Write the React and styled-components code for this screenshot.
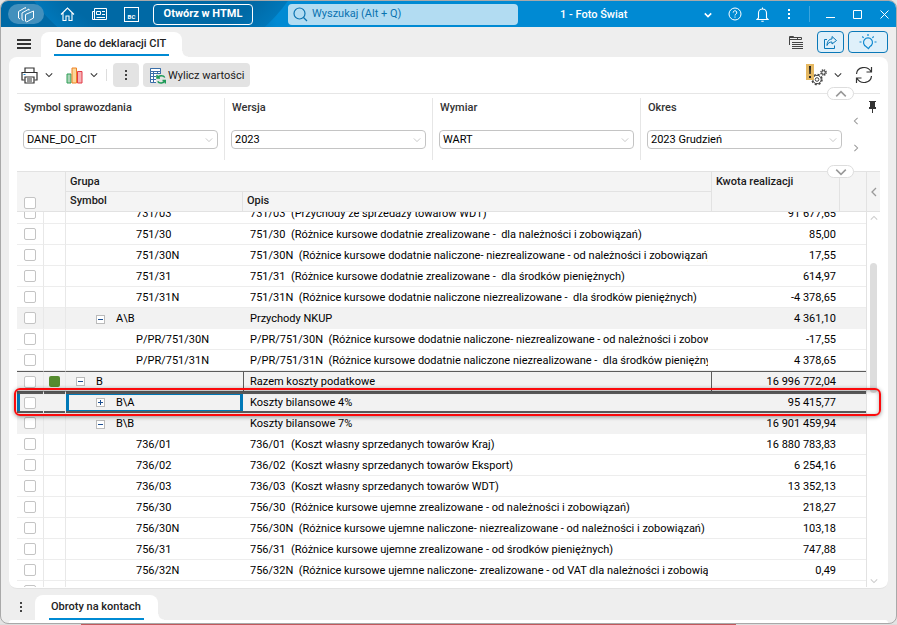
import React, { useLayoutEffect, useRef } from 'react';
import styled, { createGlobalStyle, css } from 'styled-components';

const filters = [
  { id: 'symbol', label: 'Symbol sprawozdania', value: 'DANE_DO_CIT' },
  { id: 'version', label: 'Wersja', value: '2023' },
  { id: 'dimension', label: 'Wymiar', value: 'WART' },
  { id: 'period', label: 'Okres', value: '2023 Grudzień' },
];

const rows = [
  { symbol: '731/03', name: '731/03  (Przychody ze sprzedaży towarów WDT)', amount: '91 677,65' },
  { symbol: '751/30', name: '751/30  (Różnice kursowe dodatnie zrealizowane -  dla należności i zobowiązań)', amount: '85,00' },
  { symbol: '751/30N', name: '751/30N  (Różnice kursowe dodatnie naliczone- niezrealizowane - od należności i zobowiązań)', amount: '17,55' },
  { symbol: '751/31', name: '751/31  (Różnice kursowe dodatnie zrealizowane -  dla środków pieniężnych)', amount: '614,97' },
  { symbol: '751/31N', name: '751/31N  (Różnice kursowe dodatnie naliczone niezrealizowane -  dla środków pieniężnych)', amount: '-4 378,65' },
  { symbol: 'A\\B', name: 'Przychody NKUP', amount: '4 361,10', level: 1, toggle: 'minus' },
  { symbol: 'P/PR/751/30N', name: 'P/PR/751/30N  (Różnice kursowe dodatnie naliczone- niezrealizowane - od należności i zobowiązań)', amount: '-17,55' },
  { symbol: 'P/PR/751/31N', name: 'P/PR/751/31N  (Różnice kursowe dodatnie naliczone niezrealizowane -  dla środków pieniężnych)', amount: '4 378,65' },
  { symbol: 'B', name: 'Razem koszty podatkowe', amount: '16 996 772,04', level: 0, toggle: 'minus', marked: true },
  { symbol: 'B\\A', name: 'Koszty bilansowe 4%', amount: '95 415,77', level: 1, toggle: 'plus', selected: true },
  { symbol: 'B\\B', name: 'Koszty bilansowe 7%', amount: '16 901 459,94', level: 1, toggle: 'minus' },
  { symbol: '736/01', name: '736/01  (Koszt własny sprzedanych towarów Kraj)', amount: '16 880 783,83' },
  { symbol: '736/02', name: '736/02  (Koszt własny sprzedanych towarów Eksport)', amount: '6 254,16' },
  { symbol: '736/03', name: '736/03  (Koszt własny sprzedanych towarów WDT)', amount: '13 352,13' },
  { symbol: '756/30', name: '756/30  (Różnice kursowe ujemne zrealizowane - od należności i zobowiązań)', amount: '218,27' },
  { symbol: '756/30N', name: '756/30N  (Różnice kursowe ujemne naliczone- niezrealizowane - od należności i zobowiązań)', amount: '103,18' },
  { symbol: '756/31', name: '756/31  (Różnice kursowe ujemne zrealizowane - od środków pieniężnych)', amount: '747,88' },
  { symbol: '756/32N', name: '756/32N  (Różnice kursowe ujemne naliczone- zrealizowane - od VAT dla należności i zobowiązań)', amount: '0,49' },
  { symbol: '', name: '', amount: '' },
];

const Chevron = ({ dir = 'down', size = 8, color = '#333', width = 1.3 }) => {
  const d = {
    down: 'M1 3 L5 7 L9 3',
    up: 'M1 7 L5 3 L9 7',
    left: 'M7 1 L3 5 L7 9',
    right: 'M3 1 L7 5 L3 9',
  }[dir];
  return (
    <Icon width={size} height={size} viewBox="0 0 10 10" stroke={color} strokeWidth={width}>
      <path d={d} />
    </Icon>
  );
};

const Dots = ({ color = '#444' }) => (
  <Icon width="4" height="12" viewBox="0 0 4 12" fill={color}>
    <path d="M1 1h2v2H1zM1 5h2v2H1zM1 9h2v2H1z" />
  </Icon>
);

function TitleBar() {
  return (
    <Bar>
      <BarLeft>
        <LogoButton aria-label="Menu główne">
          <Icon width="18" height="17" viewBox="0 0 18 17" stroke="#fff" strokeWidth="1">
            <path d="M3 13L1.500 12V5.500L8.500 1.500v1" />
            <path d="M6.500 14.500L5 13.500V7L12 3v1.500" />
            <path d="M8.500 8.500L16.500 5V12L9.500 16l-1-1z" />
          </Icon>
        </LogoButton>
        <BarButton aria-label="Start">
          <Icon width="15" height="14" viewBox="0 0 15 14" stroke="#fff" strokeWidth="1.100">
            <path d="M1 7.500L7.500 1 14 7.500M3 6v7.500h3V9h3v4.500h3V6" />
          </Icon>
        </BarButton>
        <BarButton aria-label="Wiadomości">
          <Icon width="17" height="14" viewBox="0 0 17 14" stroke="#fff">
            <path d="M3.500 1.500h12v11h-14V4.500h2M3.500 1.500v11M5.500 4.500h4v3h-4zM11 4.500h3M11 7.500h3M5.500 10.500H14" />
          </Icon>
        </BarButton>
        <BarButton aria-label="BC">
          <BcMark>BC</BcMark>
        </BarButton>
        <HtmlButton>Otwórz w HTML</HtmlButton>
      </BarLeft>
      <SearchBox>
        <Icon width="15" height="15" viewBox="0 0 15 15" stroke="#0b73b0" strokeWidth="1.200">
          <circle cx="6.500" cy="6.500" r="5.500" />
          <path d="M10.500 10.500L14 14" />
        </Icon>
        <input type="search" aria-label="Wyszukaj" placeholder="Wyszukaj (Alt + Q)" />
      </SearchBox>
      <CompanyPicker>
        <select aria-label="Firma">
          <option>1 - Foto Świat</option>
        </select>
        <Chevron color="#fff" size={8} width={2} />
      </CompanyPicker>
      <BarRight>
        <BarButton aria-label="Pomoc">
          <Icon width="14" height="14" viewBox="0 0 14 14" stroke="#fff">
            <circle cx="7" cy="7" r="6" />
            <path d="M5.200 5.600a1.800 1.800 0 1 1 2.700 1.500c-.7.400-.9.700-.9 1.400M7 9.500v1.200" />
          </Icon>
        </BarButton>
        <BarButton aria-label="Powiadomienia">
          <Icon width="13" height="15" viewBox="0 0 13 15" stroke="#fff" strokeWidth="1.100">
            <path d="M6.500 0.500v1.200M2.500 11V6a4 4 0 0 1 8 0v5l1.500 1.500H1zM5.300 14.200h2.400" />
          </Icon>
        </BarButton>
        <MoreButton aria-label="Więcej"><Dots color="#fff" /></MoreButton>
        <BarSeparator />
        <WindowButton aria-label="Minimalizuj">
          <Icon width="11" height="11" viewBox="0 0 11 11" stroke="#fff"><path d="M1 8.500h9" /></Icon>
        </WindowButton>
        <WindowButton aria-label="Maksymalizuj">
          <Icon width="11" height="11" viewBox="0 0 11 11" stroke="#fff"><path d="M1.500 1.500h8v8h-8z" /></Icon>
        </WindowButton>
        <WindowButton aria-label="Zamknij">
          <Icon width="11" height="11" viewBox="0 0 11 11" stroke="#fff"><path d="M1.500 1.500l8 8M9.500 1.500l-8 8" /></Icon>
        </WindowButton>
      </BarRight>
    </Bar>
  );
}

function TabStrip() {
  return (
    <Strip>
      <MenuButton aria-label="Menu">
        <Icon width="14" height="12" viewBox="0 0 14 12" fill="#333">
          <path d="M0 1h14v2H0zM0 5h14v2H0zM0 9h14v2H0z" />
        </Icon>
      </MenuButton>
      <Tab href="#cit"><span>Dane do deklaracji CIT</span></Tab>
      <StripActions>
        <BarButton aria-label="Lista okien">
          <Icon width="15" height="14" viewBox="0 0 15 14" stroke="#444">
            <path d="M1.500 10V1.500h4l.5 1h7.500v2M1.500 2.500H6M1.500 4.500h12M9.500 2.500v2M4 7.500h11M4 9.500h11M4 11.500h11M4 13.500h11" />
          </Icon>
        </BarButton>
        <OutlineButton $width={27} aria-label="Udostępnij">
          <Icon width="15" height="15" viewBox="0 0 15 15" stroke="#0a78b8">
            <path d="M4 4.500H1.500v9h10v-3" />
            <path d="M9 1.500l4.500 4L9 9V7C6.500 7 5 8 4 10.500 4 6.500 6 4 9 4z" />
          </Icon>
        </OutlineButton>
        <OutlineButton $width={40} aria-label="Podpowiedzi">
          <Icon width="18" height="16" viewBox="0 0 18 16" stroke="#0f88cf" strokeWidth="1.200">
            <path d="M7 12.500a4.500 4.500 0 1 1 4 0l-1.500 2.200z" />
            <path d="M9 0v2M3.300 2.500l1.300 1.300M14.700 2.500l-1.300 1.300M0.500 8h2M15.500 8h2" />
          </Icon>
        </OutlineButton>
      </StripActions>
    </Strip>
  );
}

function Toolbar() {
  return (
    <Tools>
      <IconButton aria-label="Drukuj">
        <Icon width="17" height="17" viewBox="0 0 17 17" stroke="#333" strokeWidth="1.200">
          <path d="M4 5V1h9v4M3.500 13H1V5.500h15V13h-2.500" />
          <path d="M4 10h9v6H4zM6 12h5M6 14h5" />
          <path d="M2.500 7.500h2" stroke="#1c86d1" />
        </Icon>
        <Chevron />
      </IconButton>
      <IconButton aria-label="Wykres">
        <Icon width="17" height="17" viewBox="0 0 17 17">
          <path d="M1 7h4v9H1z" fill="#a9d4b6" stroke="#2e9e57" />
          <path d="M11.500 4.500h4.500V16h-4.500z" fill="#f6b1b6" stroke="#e23b47" />
          <path d="M6 1h4.500v15H6z" fill="#fbd79a" stroke="#ee8324" />
        </Icon>
        <Chevron />
      </IconButton>
      <ToolSeparator />
      <GreyButton $width={26} aria-label="Więcej opcji"><Dots /></GreyButton>
      <GreyButton>
        <Icon width="17" height="17" viewBox="0 0 17 17" stroke="#3a6ea8">
          <path d="M1.500 1.500h10v14h-10z" fill="#fff" />
          <path d="M1.500 1.500h10v3h-10z" fill="#fff" />
          <path d="M2 6.500h9.500M2 9.500h7M2 12.500h6M4.500 5v10M8.500 5v10" />
          <path d="M7 7h10v10H7z" fill="#e3e3e3" stroke="none" />
          <path d="M8 8v3h3M8.500 11c1-3 6-3 7.300-.5M16.500 16.500v-3h-3M16 13.500c-1 3-6 3.200-7.300.8" stroke="#1d9a57" strokeWidth="1.500" />
        </Icon>
        <span>Wylicz wartości</span>
      </GreyButton>
      <ToolsRight>
        <IconButton aria-label="Ustawienia">
          <Icon width="21" height="22" viewBox="0 0 21 22" stroke="#444">
            <circle cx="11" cy="15.500" r="5" strokeWidth="1.500" strokeDasharray="2.100 1.827" />
            <circle cx="11" cy="15.500" r="4.200" />
            <circle cx="11" cy="15.500" r="1.800" />
            <circle cx="17.500" cy="8.500" r="2.600" strokeWidth="1.500" strokeDasharray="1.300 .742" />
            <circle cx="17.500" cy="8.500" r="1.700" />
            <path d="M0 0h8v16H0z" fill="#e5b862" stroke="none" />
            <path d="M3 2h2l-.3 8H3.300zM3 12h2v2H3z" fill="#222" stroke="none" />
          </Icon>
          <Chevron />
        </IconButton>
        <IconButton aria-label="Odśwież">
          <Icon width="18" height="18" viewBox="0 0 18 18" stroke="#333" strokeWidth="1.200">
            <path d="M1.500 8C2 1 12 -1 16 5.500M16.500 1v5h-5M16.500 10C16 17 6 19 2 12.500M1.500 17v-5h5" />
          </Icon>
        </IconButton>
      </ToolsRight>
      <Handle aria-label="Zwiń filtry"><Chevron dir="up" size={12} color="#999" /></Handle>
    </Tools>
  );
}

function Filters() {
  return (
    <FilterBar>
      {filters.map(filter => (
        <FilterField key={filter.id}>
          <label htmlFor={filter.id}>{filter.label}</label>
          <SelectBox>
            <select id={filter.id}>
              <option>{filter.value}</option>
            </select>
            <Chevron color="#bbb" width={1} />
          </SelectBox>
        </FilterField>
      ))}
      <FilterNav>
        <BarButton aria-label="Poprzedni okres"><Chevron dir="left" color="#999" /></BarButton>
        <BarButton aria-label="Następny okres"><Chevron dir="right" color="#999" /></BarButton>
      </FilterNav>
      <PinButton aria-label="Przypnij">
        <Icon width="7" height="12" viewBox="0 0 7 12" fill="#333">
          <path d="M0 0h7v1H6v5h1v2H4v4H3V8H0V6h1V1H0z" />
        </Icon>
      </PinButton>
      <Handle aria-label="Rozwiń filtry"><Chevron dir="down" size={12} color="#999" /></Handle>
    </FilterBar>
  );
}

const Columns = () => (
  <colgroup>
    <col width="27" />
    <col width="22" />
    <col width="177" />
    <col />
    <col width="128" />
    <col width="27" />
  </colgroup>
);

function ReportGrid() {
  const bodyRef = useRef(null);

  useLayoutEffect(() => {
    bodyRef.current.scrollTop = 9;
  }, []);

  return (
    <GridBox>
      <GridMain>
        <HeadTable>
          <Columns />
          <thead>
            <tr>
              <th colSpan={2} rowSpan={2} className="check">
                <Check type="checkbox" aria-label="Zaznacz wszystko" />
              </th>
              <th colSpan={2} className="top">Grupa</th>
              <th rowSpan={2} className="top">Kwota realizacji</th>
              <th rowSpan={2} aria-label="Akcje" />
            </tr>
            <tr>
              <th>Symbol</th>
              <th>Opis</th>
            </tr>
          </thead>
        </HeadTable>
        <GridBody ref={bodyRef}>
          <BodyTable>
            <Columns />
            <tbody>
              {rows.map((row, i) => (
                <Row key={i} $group={row.toggle} $marked={row.marked} $selected={row.selected}>
                  <td className="check">
                    <Check type="checkbox" aria-label={`Zaznacz ${row.symbol}`} />
                  </td>
                  <td className="mark">{row.marked && <Marker />}</td>
                  <td className="symbol">
                    <SymbolCell $indent={row.toggle ? 10 + row.level * 20 : 70}>
                      {row.toggle && (
                        <Toggle aria-label={row.toggle === 'plus' ? 'Rozwiń' : 'Zwiń'}>
                          <Icon width="7" height="7" viewBox="0 0 7 7" stroke="#1d4f91">
                            <path d={row.toggle === 'plus' ? 'M1 3.500h5M3.500 1v5' : 'M1 3.500h5'} />
                          </Icon>
                        </Toggle>
                      )}
                      {row.symbol}
                    </SymbolCell>
                  </td>
                  <td className="name"><Clip>{row.name}</Clip></td>
                  <td className="amount">{row.amount}</td>
                  <td />
                </Row>
              ))}
            </tbody>
          </BodyTable>
        </GridBody>
      </GridMain>
      <GridSide>
        <SideToggle aria-label="Panel boczny"><Chevron dir="left" size={10} color="#999" /></SideToggle>
        <ScrollTrack>
          <Chevron dir="up" color="#ccc" />
          <Thumb />
          <Chevron dir="down" color="#ccc" />
        </ScrollTrack>
      </GridSide>
      <Highlight />
    </GridBox>
  );
}

export default function App() {
  return (
    <Desktop>
      <GlobalStyle />
      <Window>
        <TitleBar />
        <TabStrip />
        <Panel>
          <Toolbar />
          <Filters />
          <ReportGrid />
        </Panel>
        <BottomStrip>
          <BarButton aria-label="Więcej zakładek"><Dots /></BarButton>
          <Tab href="#obroty" $small><span>Obroty na kontach</span></Tab>
        </BottomStrip>
        <BottomPanel />
      </Window>
    </Desktop>
  );
}

const GlobalStyle = createGlobalStyle`
  * {
    box-sizing: border-box;
  }

  body {
    margin: 0;
    color: #1a1a1a;
    font: 11px/14px Roboto, 'Liberation Sans', sans-serif;
  }

  button, input, select {
    margin: 0;
    padding: 0;
    border: 0;
    background: none;
    color: inherit;
    font: inherit;
  }

  select {
    appearance: none;
  }
`;

const Icon = styled.svg.attrs(props => ({ fill: props.fill || 'none' }))`
  display: block;
  flex: none;
`;

const Desktop = styled.div`
  display: flex;
  height: 100vh;
  padding-bottom: 1px;
  background: linear-gradient(to right, #ddd 9%, #c0595d 9%, #c0595d 82%, #ddd 82%) bottom / 100% 1px no-repeat #e4e4e4;
`;

const Window = styled.div`
  display: flex;
  flex: 1;
  flex-direction: column;
  min-width: 0;
  overflow: hidden;
  border: 1px solid #a9a9a9;
  border-radius: 8px;
  background: #eee;
`;

const Bar = styled.header`
  display: flex;
  flex: none;
  align-items: center;
  height: 26px;
  padding: 0 5px 0 7px;
  background:
    radial-gradient(circle at 160px -90px, #0069a5 130px, #0077b9 155px, transparent 156px),
    linear-gradient(to right, #0069a5 230px, #007cc2 258px, #008ad3 276px);
  color: #fff;
`;

const BarLeft = styled.div`
  display: flex;
  flex: 0 0 280px;
  align-items: center;
  gap: 16px;
`;

const BarButton = styled.button`
  display: flex;
  align-items: center;
  justify-content: center;
`;

const LogoButton = styled(BarButton)`
  width: 36px;
  height: 20px;
  border-radius: 10px;
  background: #4390bd;
`;

const BcMark = styled.span`
  width: 15px;
  height: 15px;
  border: 1px solid #fff;
  font-size: 6px;
  font-weight: 700;
  line-height: 17px;
`;

const HtmlButton = styled.button`
  width: 100px;
  height: 21px;
  margin-left: -2px;
  border: 1px solid #fff;
  border-radius: 4px;
  font-weight: 700;
`;

const SearchBox = styled.div`
  display: flex;
  flex: 0 1 230px;
  align-items: center;
  gap: 4px;
  height: 21px;
  padding: 0 5px;
  border-radius: 4px;
  background: #b2dcf2;
  color: #0b73b0;

  input {
    flex: 1;
    min-width: 0;
    outline: 0;
  }

  input::placeholder {
    color: #0b73b0;
    opacity: 1;
  }
`;

const CompanyPicker = styled.div`
  display: flex;
  flex: 1;
  align-items: center;
  padding: 1px 16px 0 42px;

  select {
    flex: 1;
    font-weight: 500;
  }
`;

const BarRight = styled.div`
  display: flex;
  flex: none;
  align-items: center;
  gap: 14px;
`;

const MoreButton = styled(BarButton)`
  margin-left: 4px;
`;

const BarSeparator = styled.span`
  width: 1px;
  height: 16px;
  margin-left: 4px;
  background: #3ba5de;
`;

const WindowButton = styled(BarButton)`
  width: 13px;
`;

const Strip = styled.nav`
  display: flex;
  flex: none;
  align-items: flex-end;
  height: 30px;
  padding: 0 8px 0 16px;
`;

const MenuButton = styled(BarButton)`
  width: 24px;
  height: 26px;
  justify-content: flex-start;
`;

const Tab = styled.a`
  position: relative;
  display: flex;
  height: 25px;
  padding: 0 ${props => (props.$small ? 14 : 13)}px;
  border-radius: 8px 8px 0 0;
  background: #fff;
  color: #222;
  font-weight: 500;
  text-decoration: none;

  span {
    height: ${props => (props.$small ? '25px' : '24px')};
    padding: 0 3px 0 2px;
    border-bottom: 2px solid #008ad3;
    line-height: 24px;
  }

  &:after {
    content: '';
    position: absolute;
    right: -6px;
    bottom: 0;
    width: 6px;
    height: 6px;
    background: radial-gradient(circle at 100% 0, transparent 5px, #fff 6px);
  }
`;

const StripActions = styled.div`
  display: flex;
  align-items: center;
  gap: 4px;
  height: 30px;
  margin-left: auto;

  > :first-child {
    margin-right: 10px;
  }
`;

const OutlineButton = styled(BarButton)`
  width: ${props => props.$width}px;
  height: 22px;
  border: 1px solid #0a78b8;
  border-radius: 4px;
  background: #dff0fa;
`;

const Panel = styled.main`
  display: flex;
  flex: 1;
  flex-direction: column;
  min-height: 0;
  margin: 0 8px;
  padding: 0 8px 1px;
  border-bottom: 1px solid #e2e2e2;
  border-radius: 8px;
  background: #fff;
`;

const Tools = styled.div`
  position: relative;
  display: flex;
  flex: none;
  align-items: center;
  height: 37px;
  padding: 0 7px 0 4px;
  border-bottom: 1px solid #e6e6e6;
`;

const IconButton = styled(BarButton)`
  gap: 7px;
  margin-right: 13px;

  &:last-child {
    margin-right: 0;
  }
`;

const ToolSeparator = styled.span`
  width: 1px;
  height: 12px;
  margin: 0 6px 0 -5px;
  background: #ddd;
`;

const GreyButton = styled(BarButton)`
  gap: 2px;
  width: ${props => (props.$width ? `${props.$width}px` : 'auto')};
  height: 24px;
  margin-right: 4px;
  padding: 0 6px;
  border-radius: 4px;
  background: #e3e3e3;

  span {
    padding-top: 1px;
  }
`;

const ToolsRight = styled.div`
  display: flex;
  align-items: center;
  margin-left: auto;
`;

const Handle = styled(BarButton)`
  position: absolute;
  right: 26px;
  bottom: -7px;
  z-index: 1;
  width: 27px;
  height: 13px;
  border: 1px solid #ddd;
  border-radius: 7px;
  background: #fff;
`;

const FilterBar = styled.section`
  position: relative;
  display: flex;
  flex: none;
  height: 78px;
  padding-top: 4px;
  border-bottom: 1px solid #e2e2e2;
`;

const FilterField = styled.div`
  display: flex;
  flex: 1;
  flex-direction: column;
  gap: 15px;
  height: 62px;
  padding: 3px 6px 0 6px;
  border-right: 1px solid #e6e6e6;

  &:nth-child(4) {
    border-right-color: transparent;
  }

  label {
    padding: 0 1px;
    color: #333;
    font-weight: 500;
  }
`;

const SelectBox = styled.div`
  display: flex;
  align-items: center;
  height: 19px;
  padding: 0 4px 0 3px;
  border: 1px solid #c4c4c4;
  border-radius: 4px;

  select {
    flex: 1;
    min-width: 0;
    color: #000;
  }
`;

const FilterNav = styled.div`
  display: flex;
  flex: 0 0 14px;
  flex-direction: column;
  align-items: center;
  gap: 19px;
  padding-top: 19px;
`;

const PinButton = styled(BarButton)`
  flex: 0 0 17px;
  align-self: flex-start;
  padding-top: 3px;
  padding-left: 2px;
`;

const GridBox = styled.section`
  position: relative;
  display: flex;
  flex: 1;
  min-height: 0;
`;

const GridMain = styled.div`
  display: flex;
  flex: 1;
  flex-direction: column;
  min-width: 0;
`;

const GridTable = styled.table`
  flex: none;
  width: 100%;
  border-spacing: 0;
  table-layout: fixed;
  line-height: 14px;

  td, th {
    padding: 0;
  }
`;

const HeadTable = styled(GridTable)`
  background: #f4f4f4;

  th {
    height: 20px;
    padding: 2px 4px;
    border-right: 1px solid #e2e2e2;
    border-bottom: 1px solid #e2e2e2;
    font-weight: 500;
    text-align: left;
    vertical-align: top;
  }

  .top {
    padding: 3px 4px 1px;
  }

  .check {
    padding: 0 7px 2px;
    vertical-align: bottom;
  }
`;

const BodyTable = styled(GridTable)`
  border-right: 1px solid #e2e2e2;
  color: #000;
`;

const GridBody = styled.div`
  flex: 1;
  min-height: 0;
  overflow: hidden;
`;

const Row = styled.tr`
  background: ${props => (props.$group ? '#f2f2f2' : '#fff')};

  td {
    height: 21px;
    border-bottom: 1px solid ${props => (props.$group ? '#f2f2f2' : '#ededed')};
  }

  .check, .mark {
    border-right: 1px solid #e8e8e8;
  }

  .check {
    padding-left: 7px;
  }

  .mark {
    padding-left: 5px;
  }

  .symbol {
    padding-top: ${props => (props.$marked || props.$selected ? 0 : 2)}px;
  }

  .name {
    padding: ${props => (props.$marked || props.$selected ? 0 : 2)}px 3px 0 7px;
  }

  .amount {
    padding: ${props => (props.$marked || props.$selected ? 0 : 2)}px 3px 0 0;
    text-align: right;
  }

  ${props => props.$marked && css`
    td {
      border-top: 1px solid #5c5c5c;
      border-bottom-color: #5c5c5c;
    }

    .name, .amount {
      box-shadow: inset 1px 0 #5c5c5c;
    }
  `}

  ${props => props.$selected && css`
    td {
      border-bottom: 0;
      box-shadow: inset 0 2px #5c5c5c, inset 0 -2px #5c5c5c;
    }

    .check, .mark {
      border-right-color: #f2f2f2;
    }

    .check {
      box-shadow: inset 0 2px #5c5c5c, inset 0 -2px #5c5c5c, inset 3px 0 #0079b8;
    }

    .symbol {
      box-shadow: inset 0 2px #5c5c5c, inset 0 -2px #5c5c5c, inset 0 0 0 3px #0079b8;
    }
  `}
`;

const Check = styled.input`
  display: block;
  width: 12px;
  height: 12px;
  appearance: none;
  border: 1px solid #c4c4c4;
  border-radius: 2px;
  background: #fff;
`;

const Marker = styled.span`
  display: block;
  width: 11px;
  height: 11px;
  border-radius: 2px;
  background: #558b2f;
`;

const SymbolCell = styled.div`
  display: flex;
  align-items: center;
  padding-left: ${props => props.$indent}px;
`;

const Toggle = styled(BarButton)`
  width: 9px;
  height: 9px;
  margin-right: 11px;
  border: 1px solid #bbb;
  background: #fff;
`;

const Clip = styled.div`
  overflow: hidden;
  white-space: pre;
`;

const GridSide = styled.div`
  display: flex;
  flex: 0 0 13px;
  flex-direction: column;
`;

const SideToggle = styled(BarButton)`
  height: 40px;
  border-bottom: 1px solid #e2e2e2;
  background: #f4f4f4;
`;

const ScrollTrack = styled.div`
  display: flex;
  flex: 1;
  flex-direction: column;
  align-items: center;
  padding: 2px 0;
`;

const Thumb = styled.div`
  width: 7px;
  height: 130px;
  margin: 41px 0 auto;
  border-radius: 4px;
  background: #ddd;
`;

/* red frame drawn over the chosen row */
const Highlight = styled.div`
  position: absolute;
  top: 216px;
  right: -1px;
  left: -3px;
  height: 28px;
  border: 2px solid #fb0a0c;
  border-radius: 6px;
  box-shadow: 0 1px 4px rgba(0, 0, 0, 0.4), inset 0 1px 4px rgba(0, 0, 0, 0.3);
  pointer-events: none;
`;

const BottomStrip = styled.nav`
  display: flex;
  flex: none;
  align-items: flex-end;
  height: 31px;
  padding-left: 18px;

  > button {
    width: 4px;
    height: 26px;
    margin-right: 12px;
  }
`;

const BottomPanel = styled.div`
  flex: none;
  height: 3px;
  margin: 0 8px;
  border-radius: 8px 8px 0 0;
  background: #fff;
`;
